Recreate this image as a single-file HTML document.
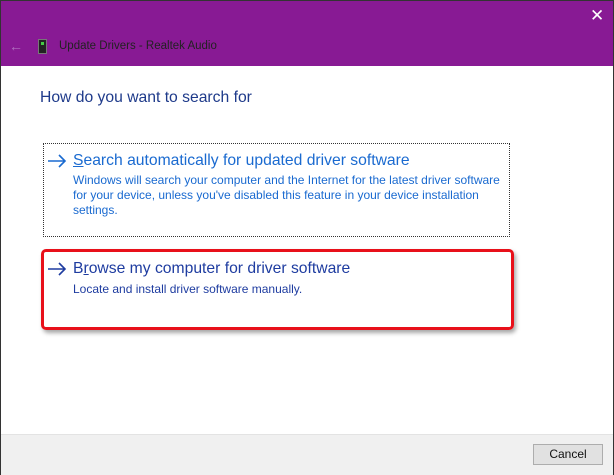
<!DOCTYPE html>
<html><head><style>
body{margin:0;width:614px;height:475px;overflow:hidden;font-family:"Liberation Sans",sans-serif;background:#fff}
.win{position:absolute;left:0;top:0;width:612px;height:473px;border:1px solid #333;background:#fff}
.tb{position:absolute;left:0;top:0;width:612px;height:65px;background:#881a94}
.x{position:absolute;left:589px;top:5px;color:#fff;font-size:17px}
.back{position:absolute;left:8px;top:37px;color:#b070c0;font-size:14px}
.ic{position:absolute;left:37px;top:38px;width:7px;height:13px;background:#222;border:1px solid #777}
.ic i{position:absolute;left:2px;top:2px;width:3px;height:3px;background:#4c4}
.tt{position:absolute;left:58px;top:39px;font-size:11.5px;color:#222}
.h{position:absolute;left:39px;top:88px;font-size:15.7px;color:#1e3a8a}
.dot{position:absolute;left:42px;top:142px;width:465px;height:92px;border:1px dotted #333}
.red{position:absolute;left:40px;top:248px;width:467px;height:75px;border:3px solid #e8101a;border-radius:5px;box-shadow:2px 3px 4px rgba(0,0,0,.35)}
.a{position:absolute;left:46px}
.l{position:absolute;left:72px;font-size:15.7px}
.d{position:absolute;left:72px;font-size:12px;line-height:15px}
.ft{position:absolute;left:0;top:433px;width:612px;height:40px;background:#f0f0f0;border-top:1px solid #e3e3e3}
.btn{position:absolute;left:532px;top:443px;width:68px;height:19px;border:1px solid #adadad;background:#e1e1e1;font-size:12px;text-align:center;line-height:19px;color:#111}
</style></head><body>
<div class="win">
<div class="tb"><div class="x">✕</div><div class="back">←</div><div class="ic"><i></i></div><div class="tt">Update Drivers - Realtek Audio</div></div>
<div class="h">How do you want to search for</div>
<div class="dot"></div>
<svg class="a" style="top:153px" width="20" height="14"><path d="M1 7H18M12 1L18 7L12 13" stroke="#1a6ad0" stroke-width="1.6" fill="none"/></svg>
<div class="l" style="top:151px;color:#1a6ad0"><u>S</u>earch automatically for updated driver software</div>
<div class="d" style="top:172px;color:#1a6ad0">Windows will search your computer and the Internet for the latest driver software<br>for your device, unless you've disabled this feature in your device installation<br>settings.</div>
<div class="red"></div>
<svg class="a" style="top:261px" width="20" height="14"><path d="M1 7H18M12 1L18 7L12 13" stroke="#1e3ca0" stroke-width="1.6" fill="none"/></svg>
<div class="l" style="top:259px;color:#1e3ca0">B<u>r</u>owse my computer for driver software</div>
<div class="d" style="top:281px;color:#1e3ca0">Locate and install driver software manually.</div>
<div class="ft"></div>
<div class="btn">Cancel</div>
</div>
</body></html>
